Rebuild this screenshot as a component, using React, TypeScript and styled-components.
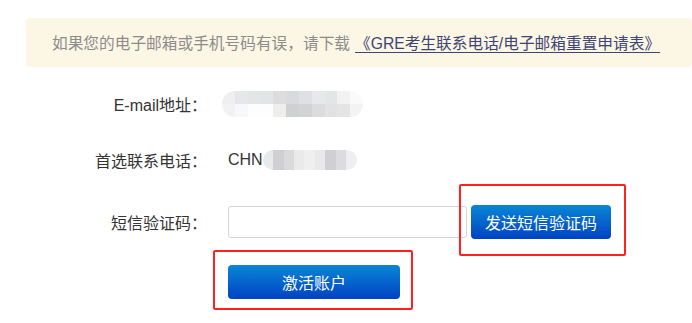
import React from "react";
import styled, {createGlobalStyle} from "styled-components";

const GlobalStyle = createGlobalStyle`
  html, body {
    margin: 0;
    padding: 0;
    background: #fff;
    overflow: hidden;
  }
  body {
    font-family: "Liberation Sans", "Noto Sans CJK SC", sans-serif;
    color: #333;
  }
`;

const Page = styled.div`
  width: 692px;
  height: 323px;
  overflow: hidden;
`;

const Notice = styled.div`
  margin: 18px 0 0 26px;
  height: 49px;
  display: flex;
  align-items: center;
  padding-left: 26px;
  background-color: #fcf6e4;
  border-radius: 4px;
  font-size: 15.7px;
  color: #8c8c8c;
  white-space: nowrap;
`;

const NoticeLink = styled.a`
  margin-left: 5px;
  color: #3d4577;
  text-decoration: underline;
  text-underline-offset: 3px;
  cursor: pointer;
`;

const Form = styled.div`
  display: grid;
  grid-template-columns: 207px 1fr;
  column-gap: 21px;
  padding-top: 24px;
`;

const Label = styled.div<{ $height: number; $gap?: number }>`
  height: ${({$height}) => $height}px;
  margin-top: ${({$gap}) => $gap || 0}px;
  display: flex;
  align-items: center;
  justify-content: flex-end;
  font-size: 16px;
  color: #333;
`;

const Value = styled.div<{ $height: number; $gap?: number }>`
  height: ${({$height}) => $height}px;
  margin-top: ${({$gap}) => $gap || 0}px;
  display: flex;
  align-items: center;
  font-size: 16px;
  color: #333;
`;

const Mosaic = styled.div<{ $width: number; $height: number; $shift?: number }>`
  width: ${({$width}) => $width}px;
  height: ${({$height}) => $height}px;
  margin-left: ${({$shift}) => $shift || 0}px;
  border-radius: ${({$height}) => $height / 2}px;
  overflow: hidden;
  display: flex;
  flex-direction: column;
  filter: blur(0.6px);
`;

const MosaicRow = styled.div`
  flex: 1;
  display: flex;
`;

const MosaicCell = styled.div`
  flex: 1;
`;

const CodeInput = styled.input`
  box-sizing: border-box;
  width: 239px;
  height: 32px;
  margin-right: 4px;
  border: 1px solid #d6d6d6;
  border-radius: 3px;
  padding: 0 8px;
  font-size: 14px;
  outline: none;
`;

const Marked = styled.span<{ $t: number; $r: number; $b: number; $l: number }>`
  position: relative;
  display: inline-flex;

  &::after {
    content: "";
    position: absolute;
    top: -${({$t}) => $t}px;
    right: -${({$r}) => $r}px;
    bottom: -${({$b}) => $b}px;
    left: -${({$l}) => $l}px;
    border: 2px solid #ff2121;
    border-radius: 2px;
    pointer-events: none;
  }
`;

const BlueButton = styled.button<{ $width: number }>`
  box-sizing: border-box;
  width: ${({$width}) => $width}px;
  height: 34px;
  border: none;
  border-radius: 4px;
  background: linear-gradient(to bottom, #0a86d4 0%, #0561cc 55%, #0042c2 100%);
  color: #fff;
  font-family: "Noto Sans CJK SC", sans-serif;
  font-size: 16px;
  cursor: pointer;
  padding: 0;
`;

const emailCells = [
    ["#efefef", "#e6e7e9", "#e4e5e7", "#e3e4e6", "#dcdcdc", "#d9dadd", "#dfe0e3", "#e8e8ea", "#e4e5e7", "#f2f2f2", "#fafafa"],
    ["#f2f2f2", "#f6f8fb", "#fdfdfd", "#fdfdfd", "#eeeeec", "#cfd0d2", "#d2d3d5", "#dcdcde", "#e2e2e4", "#e4e4e4", "#f3f3f3"],
];

const phoneCells = [
    ["#e8ebee", "#d0d0d2", "#dadadc", "#eaeaea", "#efefef", "#e9e9e9", "#d0d0d2", "#dcdcde", "#efefef"],
];

function Blurred({cells, width, height, shift}: { cells: string[][]; width: number; height: number; shift?: number }) {
    return (
        <Mosaic $width={width} $height={height} $shift={shift}>
            {cells.map((row, i) => (
                <MosaicRow key={i}>
                    {row.map((c, j) => <MosaicCell key={j} style={{backgroundColor: c}}/>)}
                </MosaicRow>
            ))}
        </Mosaic>
    );
}

export default function App() {
    return (
        <Page>
            <GlobalStyle/>
            <Notice>
                如果您的电子邮箱或手机号码有误，请下载
                <NoticeLink>《GRE考生联系电话/电子邮箱重置申请表》</NoticeLink>
            </Notice>
            <Form>
                <Label $height={26}>E-mail地址：</Label>
                <Value $height={26}>
                    <Blurred cells={emailCells} width={141} height={26} shift={-6}/>
                </Value>

                <Label $height={26} $gap={30}>首选联系电话：</Label>
                <Value $height={26} $gap={30}>
                    CHN
                    <Blurred cells={phoneCells} width={94} height={20}/>
                </Value>

                <Label $height={34} $gap={32}>短信验证码：</Label>
                <Value $height={34} $gap={32}>
                    <CodeInput/>
                    <Marked $t={21} $r={15} $b={17} $l={12}>
                        <BlueButton $width={140}>发送短信验证码</BlueButton>
                    </Marked>
                </Value>

                <div/>
                <Value $height={34} $gap={26}>
                    <Marked $t={15} $r={13} $b={11} $l={15}>
                        <BlueButton $width={172}>激活账户</BlueButton>
                    </Marked>
                </Value>
            </Form>
        </Page>
    );
}
